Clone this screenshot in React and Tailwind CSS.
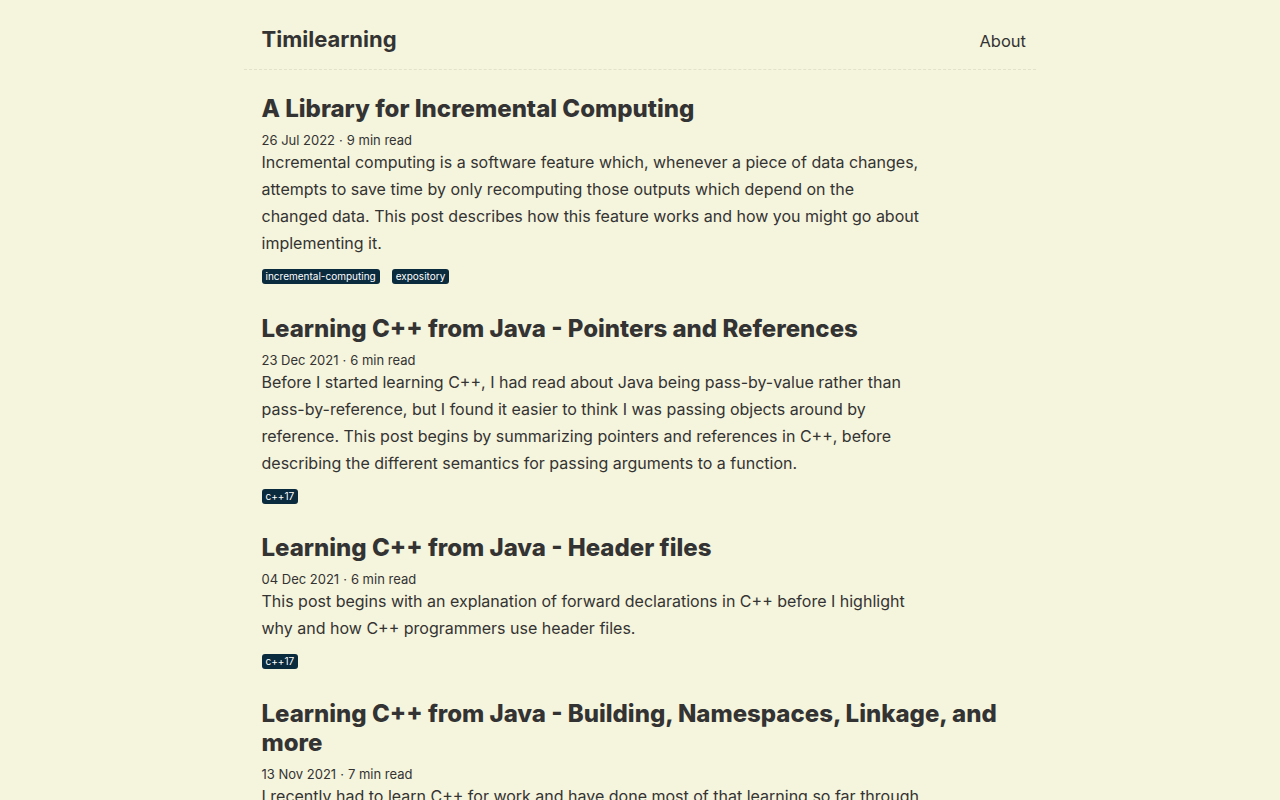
const posts = [
  {
    title: 'A Library for Incremental Computing',
    date: '26 Jul 2022',
    read: '9 min read',
    desc: 'Incremental computing is a software feature which, whenever a piece of data changes, attempts to save time by only recomputing those outputs which depend on the changed data. This post describes how this feature works and how you might go about implementing it.',
    tags: ['incremental-computing', 'expository'],
  },
  {
    title: 'Learning C++ from Java - Pointers and References',
    date: '23 Dec 2021',
    read: '6 min read',
    desc: 'Before I started learning C++, I had read about Java being pass-by-value rather than pass-by-reference, but I found it easier to think I was passing objects around by reference. This post begins by summarizing pointers and references in C++, before describing the different semantics for passing arguments to a function.',
    tags: ['c++17'],
  },
  {
    title: 'Learning C++ from Java - Header files',
    date: '04 Dec 2021',
    read: '6 min read',
    desc: 'This post begins with an explanation of forward declarations in C++ before I highlight why and how C++ programmers use header files.',
    tags: ['c++17'],
  },
  {
    title: 'Learning C++ from Java - Building, Namespaces, Linkage, and more',
    date: '13 Nov 2021',
    read: '7 min read',
    desc: 'I recently had to learn C++ for work and have done most of that learning so far through reading and writing code. This post covers some of the things I picked up along the way about building, namespaces and linkage.',
    tags: ['c++17'],
  },
]

function Post({ post }) {
  return (
    <article className="flex flex-col">
      <h2 className="text-[24px] font-extrabold leading-[29px] text-[#333]">{post.title}</h2>
      <div className="mt-[8px] text-[13px] leading-[18px] text-[#333]">
        {post.date}
        <span className="mx-[4px]">·</span>
        {post.read}
      </div>
      <p className="max-w-[662px] text-[16px] leading-[27px] text-[#333]">{post.desc}</p>
      <div className="mt-[12px] flex gap-[12px]">
        {post.tags.map((t) => (
          <span
            key={t}
            className="rounded-[3px] bg-[#0a2a3e] px-[4px] text-[10px] leading-[15px] text-white"
          >
            {t}
          </span>
        ))}
      </div>
    </article>
  )
}

export default function App() {
  return (
    <div
      className="min-h-screen bg-[#f5f4dc] text-[#333]"
      style={{ fontFamily: 'Inter, "Noto Sans", sans-serif' }}
    >
      <div className="mx-auto w-[792px]">
        <header className="flex items-center justify-between border-b border-dashed border-[#e2e1cb] pl-[17.5px] pr-[10px] pt-[24px] pb-[15px]">
          <a className="text-[22px] font-bold leading-[30px]">Timilearning</a>
          <a className="mt-[4px] text-[16.5px] leading-[26px]">About</a>
        </header>
        <main className="flex flex-col gap-[29.5px] pl-[17.5px] pr-[18px] pt-[24px] pb-10">
          {posts.map((p) => (
            <Post key={p.title} post={p} />
          ))}
        </main>
      </div>
    </div>
  )
}
